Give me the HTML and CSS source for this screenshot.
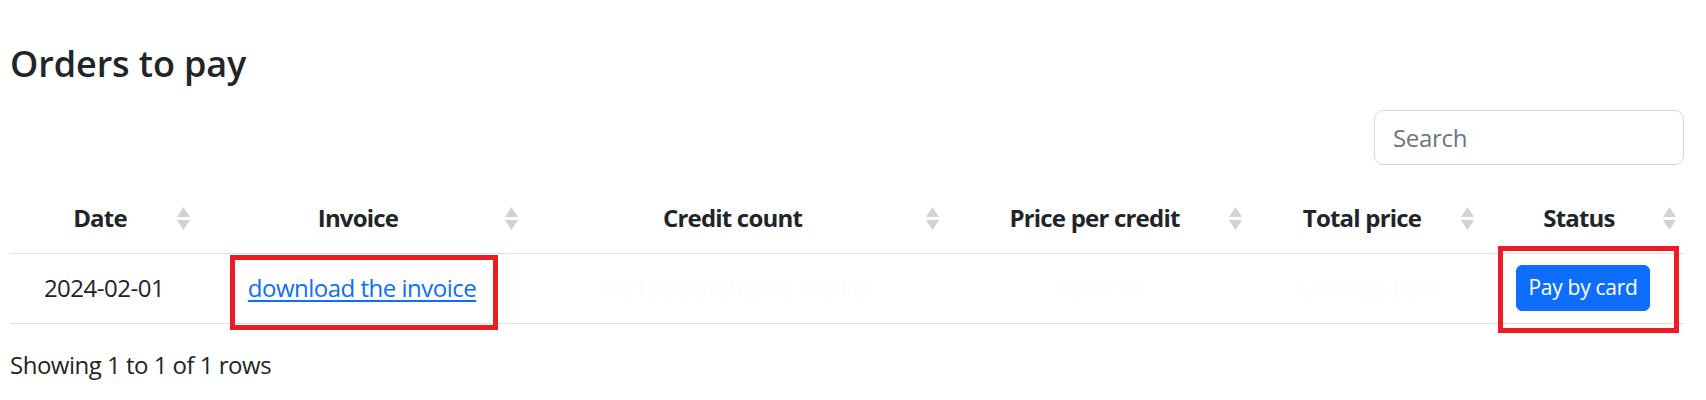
FILE: index.html
```html
<!DOCTYPE html>
<html lang="en">
<head>
<meta charset="utf-8">
<title>Orders to pay</title>
<link rel="stylesheet" href="styles.css">
</head>
<body>
<main class="page">
  <h4 class="title">Orders to pay</h4>
  <div class="toolbar">
    <input class="search" type="text" placeholder="Search">
  </div>
  <table class="orders">
    <colgroup>
      <col class="c1"><col class="c2"><col class="c3"><col class="c4"><col class="c5"><col class="c6">
    </colgroup>
    <thead>
      <tr>
        <th><div class="th-inner"><span class="lbl">Date</span><svg class="sort" viewBox="0 0 13 23"><path d="M6.5 0 13 10H0Z"/><path d="M0 13h13L6.5 23Z"/></svg></div></th>
        <th><div class="th-inner"><span class="lbl">Invoice</span><svg class="sort" viewBox="0 0 13 23"><path d="M6.5 0 13 10H0Z"/><path d="M0 13h13L6.5 23Z"/></svg></div></th>
        <th><div class="th-inner"><span class="lbl">Credit count</span><svg class="sort" viewBox="0 0 13 23"><path d="M6.5 0 13 10H0Z"/><path d="M0 13h13L6.5 23Z"/></svg></div></th>
        <th><div class="th-inner"><span class="lbl">Price per credit</span><svg class="sort" viewBox="0 0 13 23"><path d="M6.5 0 13 10H0Z"/><path d="M0 13h13L6.5 23Z"/></svg></div></th>
        <th><div class="th-inner"><span class="lbl">Total price</span><svg class="sort" viewBox="0 0 13 23"><path d="M6.5 0 13 10H0Z"/><path d="M0 13h13L6.5 23Z"/></svg></div></th>
        <th><div class="th-inner"><span class="lbl">Status</span><svg class="sort" viewBox="0 0 13 23"><path d="M6.5 0 13 10H0Z"/><path d="M0 13h13L6.5 23Z"/></svg></div></th>
      </tr>
    </thead>
    <tbody>
      <tr>
        <td>2024-02-01</td>
        <td class="marked"><a href="#" class="link">download the invoice</a><span class="mark mark-link"></span></td>
        <td class="faint">67,150 purchased credits</td>
        <td class="faint">€0.0150</td>
        <td class="faint">1,007.25 EUR</td>
        <td class="marked"><button class="btn" type="button">Pay by card</button><span class="mark mark-btn"></span></td>
      </tr>
    </tbody>
  </table>
  <div class="pagination-info">Showing 1 to 1 of 1 rows</div>
</main>
</body>
</html>
```

FILE: styles.css
```css
* { box-sizing: border-box; }

html, body {
  margin: 0;
  background: #ffffff;
}

body {
  font-family: "Open Sans", "Noto Sans", sans-serif;
  font-size: 24px;
  line-height: 1.5;
  color: #212529;
  letter-spacing: -0.5px;
}

.page {
  padding: 42px 22px 0 10px;
}

.title {
  margin: 0;
  font-size: 36px;
  font-weight: 600;
  line-height: 1.2;
  letter-spacing: -0.1px;
}

.toolbar {
  display: flex;
  justify-content: flex-end;
  margin-top: 25px;
}

.search {
  width: 310px;
  height: 55px;
  padding: 0 18px;
  border: 1px solid #d3d8de;
  border-radius: 9px;
  font-family: inherit;
  font-size: 24px;
  letter-spacing: -0.3px;
  color: #212529;
  background: #fff;
  outline: none;
}

.search::placeholder {
  color: #6c757d;
}

.orders {
  width: 100%;
  margin-top: 16px;
  border-collapse: collapse;
  table-layout: fixed;
}

.c1 { width: 188px; }
.c2 { width: 328px; }
.c3 { width: 421px; }
.c4 { width: 303px; }
.c5 { width: 232px; }
.c6 { width: 202px; }

.orders th {
  padding: 3px 0 0;
  height: 72px;
  border-bottom: 1px solid #dee2e6;
  font-weight: 700;
  vertical-align: middle;
}

.th-inner {
  display: grid;
  grid-template-columns: 1fr auto 1fr;
  align-items: center;
  padding-right: 8px;
}

.lbl {
  grid-column: 2;
  white-space: nowrap;
  letter-spacing: -0.8px;
}

.sort {
  grid-column: 3;
  justify-self: end;
  width: 13px;
  height: 23px;
  fill: #d2d2d2;
}

.orders td {
  height: 70px;
  padding: 0;
  text-align: center;
  vertical-align: middle;
  border-bottom: 1px solid #dee2e6;
}

.faint {
  color: #fdfdfd;
}

.marked {
  position: relative;
}

.link {
  color: #0d6efd;
  text-decoration: underline;
  text-underline-offset: 3px;
}

.btn {
  display: inline-block;
  padding: 6px 12px;
  font-family: inherit;
  font-size: 21px;
  line-height: 1.5;
  color: #fff;
  background: #0d6efd;
  border: 1px solid #0d6efd;
  border-radius: 6px;
  letter-spacing: -0.3px;
}

.mark {
  position: absolute;
  border: 5px solid #ed1c24;
  pointer-events: none;
}

.mark-link {
  left: 32px;
  right: 28px;
  top: 1px;
  bottom: -7px;
}

.mark-btn {
  left: 16px;
  right: 5px;
  top: -8px;
  bottom: -10px;
}

.pagination-info {
  margin-top: 23px;
}
```
